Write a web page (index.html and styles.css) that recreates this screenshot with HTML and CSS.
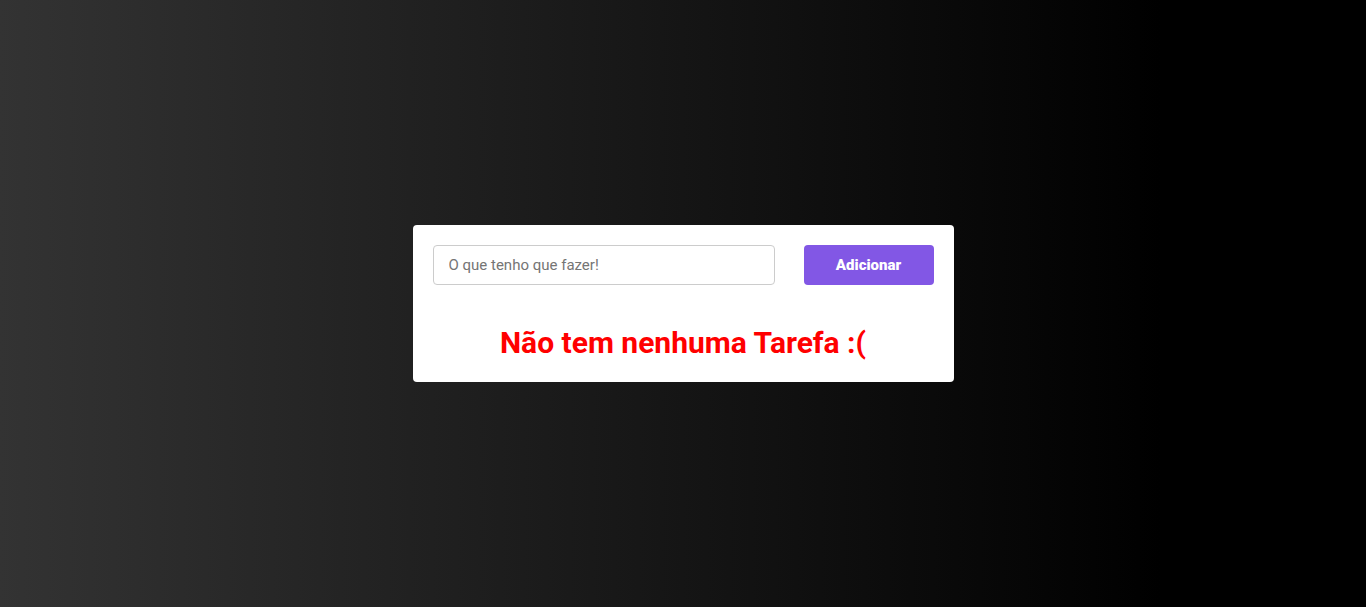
FILE: index.html
```html
<!DOCTYPE html>
<html lang="pt-BR">
<head>
<meta charset="utf-8">
<title>Tarefas</title>
<link rel="stylesheet" href="styles.css">
</head>
<body>
<main class="card">
  <form class="form">
    <input class="input" type="text" placeholder="O que tenho que fazer!">
    <button class="btn" type="button">Adicionar</button>
  </form>
  <h2 class="empty">Não tem nenhuma Tarefa :(</h2>
</main>
</body>
</html>
```

FILE: styles.css
```css
* { box-sizing: border-box; }
html, body { height: 100%; }
body {
  margin: 0;
  font-family: Roboto, "Liberation Sans", sans-serif;
  background: linear-gradient(to right, #333 0%, #000 85%);
  display: flex;
  align-items: center;
  justify-content: center;
}
.card {
  width: 541px;
  background: #fff;
  border-radius: 4px;
  padding: 20px 20px 21px;
}
.form {
  display: flex;
  justify-content: space-between;
}
.input {
  width: 342px;
  height: 40px;
  border: 1px solid #ccc;
  border-radius: 4px;
  padding: 0 15px;
  font-family: Roboto, sans-serif;
  font-size: 15px;
  color: #333;
}
.input::placeholder { color: #757575; }
.btn {
  width: 130px;
  height: 40px;
  border: 0;
  border-radius: 4px;
  background: #8257e5;
  color: #fff;
  font-family: Roboto, sans-serif;
  font-weight: 900;
  font-size: 15px;
}
.empty {
  margin: 40px 0 0;
  text-align: center;
  color: #ff0000;
  font-size: 30px;
  line-height: 36px;
  font-weight: 700;
}
```
